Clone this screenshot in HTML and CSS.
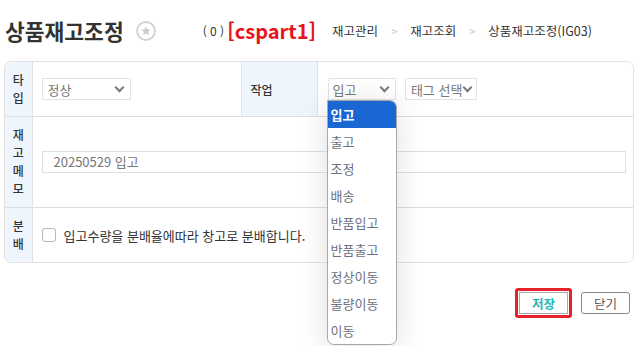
FILE: index.html
```html
<!DOCTYPE html>
<html lang="ko">
<head>
  <meta charset="UTF-8" />
  <title>상품재고조정</title>
  <link rel="stylesheet" href="styles.css">
</head>
<body>

<header class="top">
  <h1>상품재고조정</h1>
  <span class="fav">
    <svg width="20" height="20" viewBox="0 0 20 20">
      <circle cx="10" cy="10" r="9" fill="none" stroke="#d2d2d2" stroke-width="1.8"/>
      <path d="M10 5.4l1.4 2.9 3.1.4-2.3 2.1.6 3.1L10 12.4l-2.8 1.5.6-3.1-2.3-2.1 3.1-.4z" fill="#cccccc"/>
    </svg>
  </span>
  <span class="count">( 0 )</span>
  <span class="user">[cspart1]</span>
  <nav class="crumbs">
    <span>재고관리</span>
    <span class="sep">&gt;</span>
    <span>재고조회</span>
    <span class="sep">&gt;</span>
    <span>상품재고조정(IG03)</span>
  </nav>
</header>

<div class="form-box">
  <table class="form">
    <colgroup>
      <col class="c-label">
      <col class="c-type">
      <col class="c-label2">
      <col>
    </colgroup>
    <tr>
      <th class="label">타입</th>
      <td class="pad">
        <div class="sel sel-type"><span>정상</span><i class="chev"></i></div>
      </td>
      <th class="label2">작업</th>
      <td class="pad work">
        <div class="sel sel-work"><span>입고</span><i class="chev"></i></div>
        <div class="sel sel-tag"><span>태그 선택</span><i class="chev"></i></div>
        <ul class="options">
          <li class="on">입고</li>
          <li>출고</li>
          <li>조정</li>
          <li>배송</li>
          <li>반품입고</li>
          <li>반품출고</li>
          <li>정상이동</li>
          <li>불량이동</li>
          <li>이동</li>
        </ul>
      </td>
    </tr>
    <tr>
      <th class="label">재고메모</th>
      <td class="pad memo" colspan="3">
        <div class="input">20250529 입고</div>
      </td>
    </tr>
    <tr>
      <th class="label">분배</th>
      <td class="pad" colspan="3">
        <label class="check"><span class="box"></span>입고수량을 분배율에따라 창고로 분배합니다.</label>
      </td>
    </tr>
  </table>
</div>

<div class="actions">
  <span class="mark"><button class="btn save">저장</button></span>
  <button class="btn close">닫기</button>
</div>

</body>
</html>
```

FILE: styles.css
```css
body {
  margin: 0;
  padding-bottom: 28px;
  background-color: #fff;
  color: #333;
  font-family: 'Noto Sans CJK KR', 'Noto Sans', sans-serif;
  font-size: 12px;
}
.top {
  display: flex;
  align-items: center;
  height: 61px;
  padding-left: 5px;
}
.top h1 {
  margin: 0;
  font-size: 21.5px;
  font-weight: bold;
  color: #333;
}
.fav {
  display: flex;
  margin-left: 12px;
}
.count {
  margin-left: 47px;
  font-size: 12px;
  color: #333;
}
.user {
  margin-left: 3px;
  font-size: 20px;
  font-weight: bold;
  color: #e8141c;
}
.crumbs {
  display: flex;
  align-items: center;
  margin-left: 16px;
  font-size: 12.5px;
  color: #333;
}
.crumbs .sep {
  color: #c4c4c4;
  margin: 0 13px;
  font-size: 11px;
}
.form-box {
  margin: 0 3px 0 4px;
  border: 1px solid #e3e3e3;
  border-radius: 7px;
}
.form {
  width: 100%;
  border-collapse: collapse;
  table-layout: fixed;
}
.c-label { width: 27px; }
.c-type { width: 209px; }
.c-label2 { width: 76px; }
.form tr + tr th,
.form tr + tr td {
  border-top: 1px solid #dedede;
}
.label {
  background-color: #eff5fd;
  border-right: 1px solid #e3e3e3;
  padding: 9px 7px;
  line-height: 18px;
  font-weight: 500;
  word-break: break-all;
  text-align: center;
}
.form tr:first-child .label { border-top-left-radius: 7px; }
.form tr:last-child .label { border-bottom-left-radius: 7px; }
.label2 {
  background-color: #eff5fd;
  border-right: 1px solid #e3e3e3;
  border-left: 1px solid #e3e3e3;
  padding-left: 9px;
  text-align: left;
  font-weight: 500;
}
.pad {
  padding: 0 7px 0 9px;
}
.work {
  position: relative;
  padding-left: 10px;
}
.sel {
  display: inline-flex;
  align-items: center;
  justify-content: space-between;
  box-sizing: border-box;
  height: 22px;
  padding: 0 5px;
  border: 1px solid #dfe4ea;
  color: #777;
  font-size: 13px;
  vertical-align: middle;
}
.sel-type { width: 89px; }
.sel-work { width: 68px; padding-left: 4px; }
.sel-tag { width: 72px; margin-left: 6px; padding-right: 3px; }
.chev {
  width: 5px;
  height: 5px;
  border-right: 2px solid #7a7a7a;
  border-bottom: 2px solid #7a7a7a;
  transform: rotate(45deg);
  margin: -3px 2px 0 0;
}
.options {
  position: absolute;
  left: 9px;
  top: 38px;
  z-index: 5;
  width: 70px;
  box-sizing: border-box;
  margin: 0;
  padding: 0;
  list-style: none;
  background: #fff;
  border: 1px solid #a9a9a9;
  border-radius: 0 7px 7px 7px;
  box-shadow: 0 4px 30px rgba(0, 0, 0, 0.13);
  overflow: hidden;
}
.options li {
  height: 27px;
  line-height: 27px;
  padding-left: 3px;
  color: #6d7080;
  font-size: 13px;
}
.options li.on {
  background-color: #1a67d3;
  color: #fff;
  font-weight: bold;
}
.input {
  box-sizing: border-box;
  height: 22px;
  line-height: 20px;
  padding: 0 11px;
  border: 1px solid #dae1ea;
  color: #777;
  font-size: 13px;
}
.check {
  display: flex;
  align-items: center;
  color: #333;
  font-size: 13px;
}
.check .box {
  width: 12px;
  height: 12px;
  border: 1px solid #b8b8b8;
  border-radius: 3px;
  margin-right: 8px;
}
.actions {
  display: flex;
  justify-content: flex-end;
  align-items: center;
  margin-top: 25px;
  padding-right: 7px;
}
.mark {
  display: flex;
  padding: 1px;
  border: 3px solid #e8202a;
  border-radius: 3px;
  margin-right: 9px;
}
.btn {
  height: 22px;
  width: 49px;
  background: #fff;
  font-family: inherit;
  font-size: 12.5px;
  border: 1px solid #999;
  border-radius: 3px;
  padding: 0;
}
.save {
  color: #1fb7b4;
  font-weight: bold;
  border-color: #aaa;
  border-radius: 0;
}
.close {
  color: #555;
  border-color: #888;
}
```
